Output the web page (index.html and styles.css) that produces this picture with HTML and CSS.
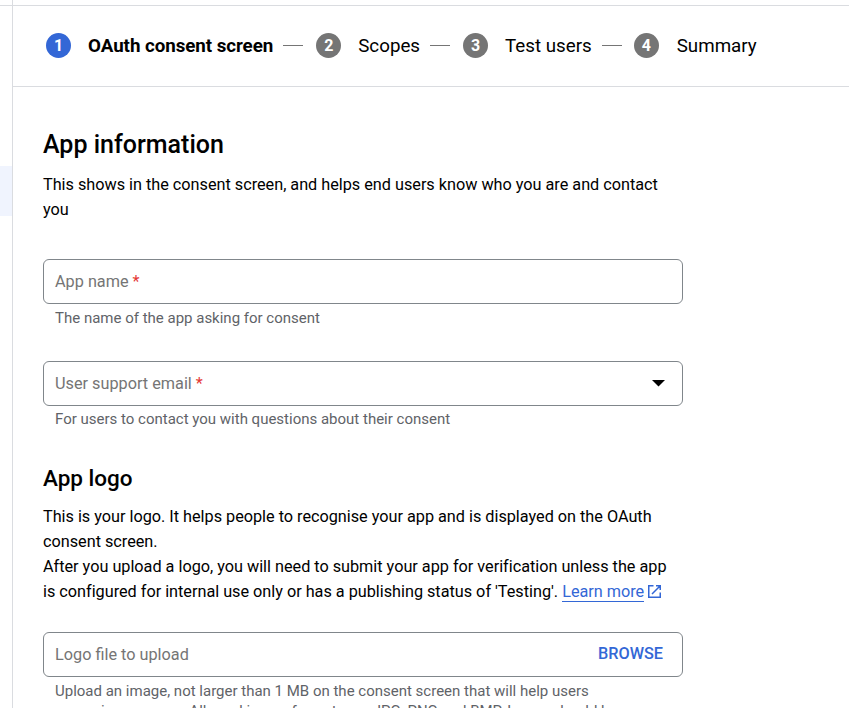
FILE: index.html
```html
<!DOCTYPE html>
<html lang="en">
<head>
<meta charset="utf-8">
<title>OAuth consent screen</title>
<link rel="stylesheet" href="styles.css">
</head>
<body>
<div class="app">
  <aside class="rail"><div class="rail-active"></div></aside>
  <main class="main">
    <nav class="stepper">
      <span class="num active">1</span><span class="label current">OAuth consent screen</span>
      <span class="dash"></span>
      <span class="num">2</span><span class="label">Scopes</span>
      <span class="dash"></span>
      <span class="num">3</span><span class="label">Test users</span>
      <span class="dash last"></span>
      <span class="num">4</span><span class="label">Summary</span>
    </nav>
    <form class="form">
      <h2 class="title">App information</h2>
      <p class="text">This shows in the consent screen, and helps end users know who you are and contact<br>you</p>
      <div class="field first"><span class="placeholder">App name <b class="req">*</b></span></div>
      <div class="hint">The name of the app asking for consent</div>
      <div class="field second"><span class="placeholder">User support email <b class="req">*</b></span>
        <svg class="caret" width="14" height="7" viewBox="0 0 14 7"><path d="M0 0h13L6.500 6.500z"/></svg>
      </div>
      <div class="hint tight">For users to contact you with questions about their consent</div>
      <h3 class="subtitle">App logo</h3>
      <p class="text">This is your logo. It helps people to recognise your app and is displayed on the OAuth<br>consent screen.<br>After you upload a logo, you will need to submit your app for verification unless the app<br>is configured for internal use only or has a publishing status of 'Testing'. <a class="link">Learn more</a><svg class="ext" width="13" height="13" viewBox="0 0 13 13"><path d="M5.500.75H.75v11.500h11.500V7.500M8 .75h4.250V5M12.250.75L4 9"/></svg></p>
      <div class="field third"><span class="placeholder">Logo file to upload</span><span class="browse">BROWSE</span></div>
      <div class="hint">Upload an image, not larger than 1 MB on the consent screen that will help users<br>recognise your app. Allowed image formats are JPG, PNG and BMP. Logos should be</div>
    </form>
  </main>
</div>
</body>
</html>
```
FILE: styles.css
```css
* { box-sizing: border-box; }
html, body { margin: 0; height: 708px; overflow: hidden; }
body { background: #fff; color: #000; font-family: Roboto, "Liberation Sans", sans-serif; }
.app { display: flex; height: 708px; background: linear-gradient(#dadce0, #dadce0) 0 5px / 100% 1px no-repeat; }
.rail { width: 13px; flex: none; border-right: 1px solid #dadce0; padding-top: 166px; }
.rail-active { height: 50px; background: #f0f4fe; }
.main { flex: 1; }
.stepper { display: flex; align-items: center; height: 81px; margin-top: 6px; padding-left: 33px; padding-bottom: 1px; border-bottom: 1px solid #dadce0; }
.num { width: 25px; height: 25px; border-radius: 50%; background: #757575; color: #fff; font-size: 16px; font-weight: 700; line-height: 25px; text-align: center; flex: none; }
.num.active { background: #3367d6; }
.label { margin-left: 17px; padding-top: 2px; font-size: 18.750px; line-height: 25px; white-space: nowrap; }
.current { font-weight: 700; letter-spacing: -0.050px; }
.dash { width: 20px; height: 1px; background: #757575; margin: 0 13px 0 10px; flex: none; }
.dash.last { margin-right: 12px; }
.last ~ .label { margin-left: 18px; }
.form { padding: 42px 0 0 30px; width: 670px; }
.title, .subtitle { margin: 0; font-weight: 500; white-space: nowrap; }
.title { font-size: 25px; line-height: 32px; }
.subtitle { font-size: 22.500px; line-height: 30px; margin-top: 34px; }
.text { margin: 11px 0 0; font-size: 16.250px; line-height: 25px; letter-spacing: -0.016px; white-space: nowrap; }
.field { display: flex; align-items: center; justify-content: space-between; height: 45px; border: 1px solid #80868b; border-radius: 6px; padding: 0 19px 0 11px; }
.first { margin-top: 37px; }
.second { margin-top: 33px; }
.third { margin-top: 28px; }
.placeholder { color: #757575; font-size: 16.250px; }
.req { color: #e53935; font-weight: 400; }
.caret { margin-right: -3px; }
.hint { margin: 4px 0 0 12px; color: #5f6368; font-size: 15px; line-height: 20px; white-space: nowrap; }
.tight { margin-top: 3px; }
.link { color: #3367d6; border-bottom: 1px solid #3367d6; }
.ext { margin-left: 4px; margin-bottom: -1px; fill: none; stroke: #3367d6; stroke-width: 1.500; }
.browse { color: #3367d6; font-size: 16.250px; font-weight: 500; padding-bottom: 2px; }
```
